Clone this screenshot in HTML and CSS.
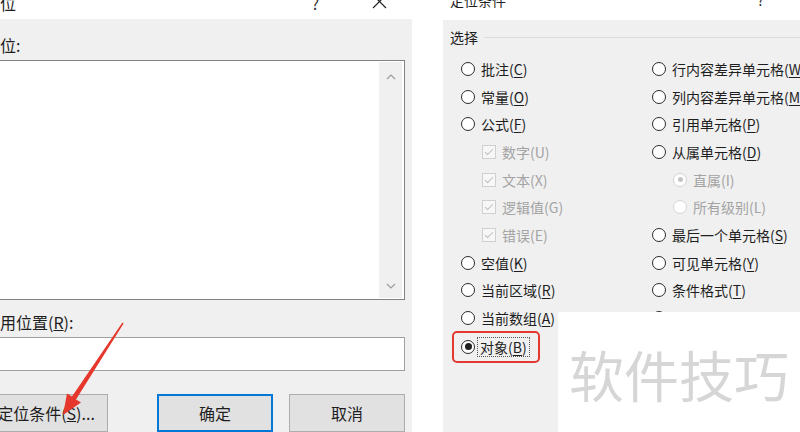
FILE: index.html
```html
<!DOCTYPE html>
<html lang="zh-CN">
<head>
    <meta charset="UTF-8">
    <title>定位条件</title>
    <link rel="stylesheet" href="styles.css">
</head>
<body>
    <div class="screen">
        <!-- Go To dialog, left edge runs off the shot -->
        <div class="dlg dlg-goto">
            <div class="titlebar">
                <span class="title">定位</span>
                <span class="help">?</span>
                <svg class="close" viewBox="0 0 15 15"><path d="M1 1 L14 14 M14 1 L1 14" /></svg>
            </div>
            <div class="dlg-body">
                <div class="field-label">定位:</div>
                <div class="listbox">
                    <div class="list-area"></div>
                    <div class="vscroll">
                        <svg class="chev" viewBox="0 0 10 6"><path d="M1 5 L5 1 L9 5" /></svg>
                        <svg class="chev" viewBox="0 0 10 6"><path d="M1 1 L5 5 L9 1" /></svg>
                    </div>
                </div>
                <div class="field-label ref-label">引用位置(<u>R</u>):</div>
                <div class="textbox"></div>
                <div class="btn-row">
                    <button class="btn btn-special">定位条件(<u>S</u>)...</button>
                    <button class="btn btn-default">确定</button>
                    <button class="btn">取消</button>
                </div>
            </div>
        </div>

        <!-- Go To Special dialog -->
        <div class="dlg dlg-special">
            <div class="titlebar">
                <span class="title">定位条件</span>
                <span class="help">?</span>
                <svg class="close" viewBox="0 0 15 15"><path d="M1 1 L14 14 M14 1 L1 14" /></svg>
            </div>
            <div class="dlg-body">
                <div class="group-head">
                    <span>选择</span>
                    <span class="rule"></span>
                </div>
                <div class="opts">
                    <div class="opt-col">
                        <div class="opt"><span class="radio"></span><span>批注(<u>C</u>)</span></div>
                        <div class="opt"><span class="radio"></span><span>常量(<u>O</u>)</span></div>
                        <div class="opt"><span class="radio"></span><span>公式(<u>F</u>)</span></div>
                        <div class="opt sub off"><span class="chk"></span><span>数字(U)</span></div>
                        <div class="opt sub off"><span class="chk"></span><span>文本(X)</span></div>
                        <div class="opt sub off"><span class="chk"></span><span>逻辑值(G)</span></div>
                        <div class="opt sub off"><span class="chk"></span><span>错误(E)</span></div>
                        <div class="opt"><span class="radio"></span><span>空值(<u>K</u>)</span></div>
                        <div class="opt"><span class="radio"></span><span>当前区域(<u>R</u>)</span></div>
                        <div class="opt"><span class="radio"></span><span>当前数组(<u>A</u>)</span></div>
                        <div class="opt picked"><span class="radio on"></span><span class="focus">对象(<u>B</u>)</span></div>
                    </div>
                    <div class="opt-col">
                        <div class="opt"><span class="radio"></span><span>行内容差异单元格(<u>W</u>)</span></div>
                        <div class="opt"><span class="radio"></span><span>列内容差异单元格(<u>M</u>)</span></div>
                        <div class="opt"><span class="radio"></span><span>引用单元格(<u>P</u>)</span></div>
                        <div class="opt"><span class="radio"></span><span>从属单元格(<u>D</u>)</span></div>
                        <div class="opt sub off"><span class="radio on"></span><span>直属(I)</span></div>
                        <div class="opt sub off"><span class="radio"></span><span>所有级别(L)</span></div>
                        <div class="opt"><span class="radio"></span><span>最后一个单元格(<u>S</u>)</span></div>
                        <div class="opt"><span class="radio"></span><span>可见单元格(<u>Y</u>)</span></div>
                        <div class="opt"><span class="radio"></span><span>条件格式(<u>T</u>)</span></div>
                        <div class="opt"><span class="radio"></span><span>数据验证(<u>V</u>)</span></div>
                    </div>
                </div>
            </div>
        </div>
    </div>

    <!-- annotation arrow pointing at the button -->
    <svg class="arrow" viewBox="0 0 130 432">
        <polygon points="63,415 81,402.5 76,399.5 123.6,323.4 122.4,322.6 72,396.6 67,393.5" />
    </svg>

    <div class="watermark">软件技巧</div>
</body>
</html>
```

FILE: styles.css
```css
body {
    margin: 0;
    background: #fff;
    font-family: "Noto Sans CJK SC", "Noto Sans", sans-serif;
    color: #1e1e1e;
    overflow: hidden;
    height: 432px;
    position: relative;
}
.screen {
    display: flex;
    gap: 31px;
    height: 432px;
}
.dlg {
    display: flex;
    flex-direction: column;
    flex-shrink: 0;
    white-space: nowrap;
}
.dlg-goto {
    width: 436px;
    margin-left: -24px;
    font-size: 16px;
}
.dlg-special {
    width: 420px;
    font-size: 14px;
}

/* title bars */
.titlebar {
    display: flex;
    align-items: flex-start;
    background: #fff;
    padding-left: 8px;
}
.dlg-goto .titlebar {
    height: 25px;
    padding-right: 25px;
}
.dlg-special .titlebar {
    height: 20px;
    padding-left: 7px;
    padding-right: 31px;
}
.title,
.help {
    line-height: 16px;
    margin-top: -5px;
}
.dlg-special .title,
.dlg-special .help {
    margin-top: -8px;
}
.help {
    margin-left: auto;
    margin-right: 53px;
    color: #333;
}
.close {
    width: 15px;
    height: 15px;
    margin-top: -6px;
    fill: none;
    stroke: #222;
    stroke-width: 1.2;
}

.dlg-body {
    flex: 1;
    background: #f0f0f0;
}

/* left dialog */
.dlg-goto .dlg-body {
    padding: 16px 7px 0 8px;
}
.field-label {
    line-height: 20px;
}
.ref-label {
    margin-top: 12px;
}
.listbox {
    display: flex;
    margin-top: 5px;
    height: 238px;
    border: 1px solid #828282;
    background: #fff;
}
.list-area {
    flex: 1;
}
.vscroll {
    width: 23px;
    margin: 1px 2px 1px 0;
    background: #f0f0f0;
    display: flex;
    flex-direction: column;
    justify-content: space-between;
    align-items: center;
    padding: 12px 0 9px;
}
.chev {
    width: 10px;
    height: 6px;
    fill: none;
    stroke: #9a9a9a;
    stroke-width: 1.1;
}
.textbox {
    margin-top: 5px;
    height: 32px;
    border: 1px solid #a0a0a0;
    background: #fff;
}
.btn-row {
    display: flex;
    margin-top: 23px;
}
.btn {
    font: inherit;
    color: #1e1e1e;
    height: 38px;
    width: 116px;
    padding: 0;
    background: #e1e1e1;
    border: 1px solid #adadad;
}
.btn-special {
    width: 124px;
}
.btn-default {
    margin-left: auto;
    margin-right: 16px;
    border: 2px solid #0078d7;
}

/* right dialog */
.dlg-special .dlg-body {
    padding: 7px 0 0 7px;
}
.group-head {
    display: flex;
    align-items: center;
    gap: 6px;
    line-height: 20px;
}
.rule {
    flex: 1;
    border-top: 1px solid #dcdcdc;
}
.opts {
    display: flex;
    margin-top: 8px;
    padding-left: 11px;
}
.opt-col {
    width: 191px;
    display: flex;
    flex-direction: column;
    align-items: flex-start;
}
.opt {
    height: 27.7px;
    display: flex;
    align-items: center;
    gap: 6px;
}
.opt u {
    text-decoration-thickness: 1px;
    text-underline-offset: 2px;
}
.opt.sub {
    padding-left: 21px;
}
.opt.off {
    color: #a3a3a3;
}
.radio {
    width: 12px;
    height: 12px;
    border: 1.3px solid #2b2b2b;
    border-radius: 50%;
    background: #fff;
    display: inline-grid;
    place-items: center;
}
.radio.on::after {
    content: "";
    width: 7px;
    height: 7px;
    border-radius: 50%;
    background: #1e1e1e;
}
.off .radio {
    border-color: #d4d4d4;
}
.off .radio.on::after {
    background: #c4c4c4;
    width: 5px;
    height: 5px;
}
.chk {
    width: 12px;
    height: 12px;
    border: 1px solid #d0d0d0;
    background: #f7f7f7;
    display: inline-grid;
    place-items: center;
}
.chk::after {
    content: "";
    width: 3px;
    height: 7px;
    margin-top: -2px;
    border: solid #bdbdbd;
    border-width: 0 1px 1px 0;
    transform: rotate(45deg);
}

/* highlighted option */
.opt.picked {
    height: 20px;
    margin: -1px 0 0 -9px;
    padding: 4px 9px 4px 7px;
    border: 2.5px solid #e2382d;
    border-radius: 5px;
    gap: 3px;
}
.focus {
    outline: 1px dotted #555;
    padding: 0 2px;
    line-height: 18px;
}

.arrow {
    position: absolute;
    left: 0;
    top: 0;
    width: 130px;
    height: 432px;
    fill: #e5372c;
    pointer-events: none;
}
.watermark {
    position: absolute;
    left: 558px;
    top: 312px;
    right: 0;
    bottom: 0;
    background: #fff;
    display: flex;
    align-items: center;
    justify-content: center;
    font-size: 55px;
    color: #d6d6d6;
    padding-top: 2px;
}
```
